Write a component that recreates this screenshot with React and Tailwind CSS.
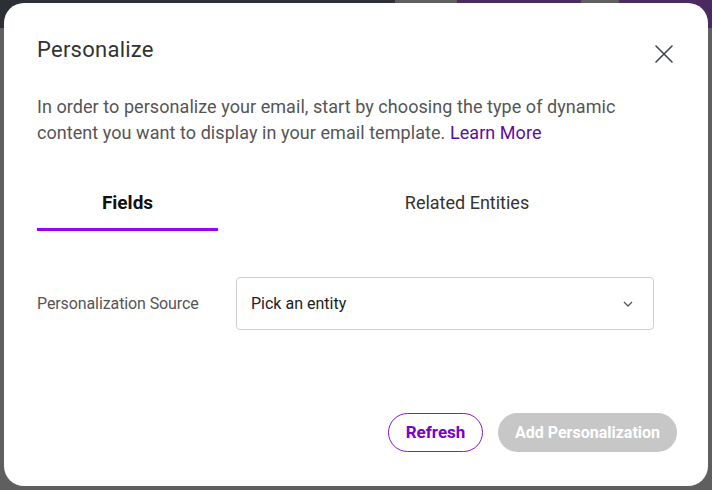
export default function App() {
  return (
    <div className="relative w-[712px] h-[490px] overflow-hidden bg-[#5f5f5f]" style={{ fontFamily: 'Roboto, "Liberation Sans", sans-serif' }}>
      <div className="flex h-[28px]">
        <div className="w-[395px] bg-[#2c2f34]" />
        <div className="w-[62px] bg-[#5f5f5f]" />
        <div className="w-[124px] bg-[#4b2b5f]" />
        <div className="w-[38px] bg-[#5f5f5f]" />
        <div className="flex-1 bg-[#4b2b5f]" />
      </div>
      <div className="absolute left-[4px] top-[3px] w-[704px] h-[483px] rounded-[20px] bg-white px-[33px] flex flex-col">
        <div className="flex items-start justify-between pt-[33px]">
          <h1 className="text-[22px] tracking-[0.25px] leading-[28px] text-[#333]">Personalize</h1>
          <button className="mt-[8px] mr-[1px] w-[20px] h-[20px] flex items-center justify-center" aria-label="Close">
            <svg width="20" height="20" viewBox="0 0 20 20" fill="none" stroke="#3f4450" strokeWidth="1.6" strokeLinecap="round">
              <path d="M2 2 L18 18 M18 2 L2 18" />
            </svg>
          </button>
        </div>
        <p className="mt-[30px] w-[600px] text-[18px] tracking-[0.06px] leading-[26px] text-[#555]">
          In order to personalize your email, start by choosing the type of dynamic content you want to display in your email template. <a className="text-[#5a0e9e]">Learn More</a>
        </p>
        <div className="mt-[44px] flex">
          <div className="w-[181px] flex flex-col items-center">
            <span className="text-[19px] leading-[26px] font-bold text-[#111]">Fields</span>
            <div className="mt-[12px] h-[3px] w-full bg-[#9b00f5]" />
          </div>
          <div className="ml-auto w-[416px] flex justify-center">
            <span className="text-[18px] leading-[26px] text-[#333]">Related Entities</span>
          </div>
        </div>
        <div className="mt-[46px] flex items-center">
          <span className="w-[199px] text-[16px] tracking-[-0.1px] text-[#555]">Personalization Source</span>
          <div className="w-[418px] h-[53px] border border-[#cfcfcf] rounded-[4px] flex items-center justify-between pl-[14px] pr-[19px]">
            <span className="text-[16px] text-[#222]">Pick an entity</span>
            <svg width="12" height="8" viewBox="0 0 12 8" fill="none" stroke="#555" strokeWidth="1.3">
              <path d="M2 2 L6 6 L10 2" />
            </svg>
          </div>
        </div>
        <div className="mt-auto mb-[34px] -mr-[2px] flex justify-end gap-[15px]">
          <button className="h-[39px] w-[95px] rounded-full border border-[#8a16d4] text-[#7a00c8] font-bold text-[17px]">Refresh</button>
          <button className="h-[39px] w-[179px] rounded-full bg-[#c7c7c7] text-white font-bold text-[16px]">Add Personalization</button>
        </div>
      </div>
    </div>
  );
}
